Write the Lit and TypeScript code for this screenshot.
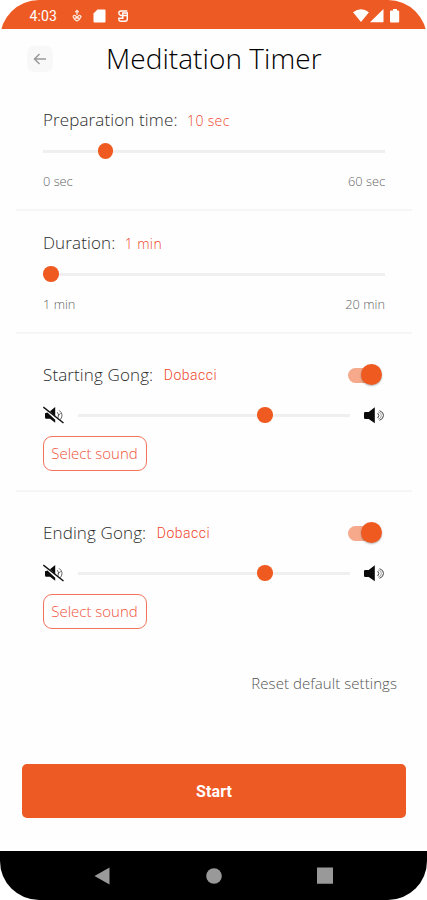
import { LitElement, html, css, svg } from "lit";
import { customElement, property } from "lit/decorators.js";

@customElement("value-slider")
class ValueSlider extends LitElement {
  @property({ type: Number }) value = 0;
  static styles = css`
    :host { display: block; flex: 1; height: 16px; }
    .rail { height: 16px; display: flex; align-items: center; position: relative; }
    .track { flex: 1; height: 3px; background: #efefef; }
    .thumb {
      position: absolute; top: 0.3px; width: 15.6px; height: 15.6px; border-radius: 50%;
      background: #ee5a20;
    }
  `;
  render() {
    return html`<div class="rail">
      <div class="track"></div>
      <div class="thumb" style="left: calc((100% - 15.6px) * ${this.value})"></div>
    </div>`;
  }
}

const speaker = svg`<path fill="#0a0a0a" d="M1 6.2Q1 5 2.2 5H5.7l6.1-4.7v15.9L5.7 12H2.200Q1 12 1 10.800z"/>
  <path fill="none" stroke="#444" stroke-width="1" d="M14.700 6.200q2.400 2.300 0 4.800M16.500 3.600q4.400 1.600 4 5.100t-4 4.600"/>
  <path fill="none" stroke="#888" stroke-width=".8" d="M15.100 4.800q3.600 1.200 3.300 3.900t-3.300 3.700"/>`;

@customElement("gong-section")
class GongSection extends LitElement {
  @property() label = "";
  @property() sound = "";
  static styles = css`
    :host { display: block; font-family: "Open Sans", sans-serif; font-weight: 300; }
    .head { display: flex; align-items: center; height: 24px; white-space: nowrap; }
    .label { font-size: 17px; color: #2c2c2c; letter-spacing: 0.12px; margin-top: -2px; }
    .sound { font: 300 14px Roboto, sans-serif; color: #f0432c; margin-left: 10.5px; letter-spacing: 0.48px; }
    .switch { margin-left: auto; margin-right: 3.5px; width: 34px; height: 22px; position: relative; display: flex; align-items: center; }
    .bar { width: 30px; height: 15px; border-radius: 8px; background: #f6a98b; }
    .knob {
      position: absolute; right: 0; top: 0; width: 21px; height: 21px; border-radius: 50%;
      background: #ee5a20; box-shadow: 0 1px 2px rgba(0, 0, 0, 0.3);
    }
    .volume { display: flex; align-items: center; height: 20px; margin-top: 18px; }
    .volume value-slider { margin: 0 13.5px 0 13.5px; }
    svg { display: block; flex: none; }
    .select {
      box-sizing: border-box; width: 104px; height: 35px; margin-top: 11px; display: flex; align-items: center;
      justify-content: center; border: 1px solid #f3735d; border-radius: 9px; background: none; padding: 0 1px 1px 0;
      font: 300 15px "Open Sans", sans-serif; color: #f0533c; white-space: nowrap;
    }
  `;
  render() {
    return html`
      <div class="head">
        <span class="label">${this.label}</span><span class="sound">${this.sound}</span>
        <div class="switch"><div class="bar"></div><div class="knob"></div></div>
      </div>
      <div class="volume">
        <svg width="21" height="18" viewBox="0 0 21 18">
          <path fill="#0a0a0a" d="M7 5.200 12.200 1v9.600zM2 7.200l2.500-.7 7.700 7.300v2.900L7 12.800H3.200Q2 12.800 2 11.300z"/>
          <path fill="none" stroke="#555" stroke-width=".9" d="M14.300 6.200q2.500 2.500.6 5.800M16.200 4.400q5 4 1.200 9.200M14.700 9.500l3-2"/>
          <path stroke="#111" stroke-width="1.500" d="M.3 1 20.500 17"/>
        </svg>
        <value-slider .value=${0.7}></value-slider>
        <svg width="22" height="17" viewBox="0 0 22 17">${speaker}</svg>
      </div>
      <button class="select">Select sound</button>
    `;
  }
}

@customElement("time-section")
class TimeSection extends LitElement {
  @property() label = "";
  @property() current = "";
  @property() min = "";
  @property() max = "";
  @property({ type: Number }) value = 0;
  static styles = css`
    :host { display: block; font-family: "Open Sans", sans-serif; font-weight: 300; white-space: nowrap; }
    .head { display: flex; align-items: center; height: 24px; margin-bottom: 11px; }
    .label { font-size: 17px; color: #2c2c2c; letter-spacing: 0.12px; margin-top: -2px; }
    .current { font-size: 14px; color: #f0432c; margin: 1px 0 0 9.5px; letter-spacing: 0.35px; }
    .range { display: flex; justify-content: space-between; margin-top: 12.5px; font-size: 12.8px; line-height: 18px; color: #666; }
  `;
  render() {
    return html`
      <div class="head"><span class="label">${this.label}</span><span class="current">${this.current}</span></div>
      <value-slider .value=${this.value}></value-slider>
      <div class="range"><span>${this.min}</span><span>${this.max}</span></div>
    `;
  }
}

@customElement("app-root")
class AppRoot extends LitElement {
  static styles = css`
    :host { display: block; width: 427px; height: 900px; background: #fff; font-family: "Open Sans", sans-serif; }
    .phone { height: 900px; display: flex; flex-direction: column; overflow: hidden; border-radius: 39px; background: #fefefe; }
    .status { height: 29px; flex: none; background: #ee5a24; display: flex; align-items: center; box-sizing: border-box; padding: 3px 27px 0 29.5px; }
    .clock { font: 400 14px Roboto, sans-serif; color: #fff; width: 41.5px; letter-spacing: 0.1px; }
    .spacer { flex: 1; }
    svg { display: block; flex: none; }
    .header { height: 60px; flex: none; display: flex; align-items: center; padding-left: 27px; }
    .back { width: 26px; height: 26px; border-radius: 7px; background: #f8f8f8; display: grid; place-items: center; }
    h1 { margin: -2px 0 0 53px; font-weight: 300; font-size: 28px; line-height: 40px; color: #000; white-space: nowrap; letter-spacing: 0.06px; }
    .block { margin: 0 15px 0 16px; padding: 0 27px; box-sizing: border-box; border-bottom: 2px solid #f6f6f6; flex: none; }
    .prep { height: 122px; padding-top: 19px; }
    .duration { height: 123px; padding-top: 20px; }
    .gong { height: 158px; padding-top: 29px; }
    .last { border: none; padding-top: 29px; }
    .reset { align-self: flex-end; margin: 23px 30px 0 0; font-size: 15px; line-height: 20px; font-weight: 300; color: #555; white-space: nowrap; letter-spacing: 0.06px; }
    .start { margin: 71px 21px 0 22px; height: 54px; flex: none; border: none; border-radius: 5px; background: #ee5a24; color: #fff; font: 700 16px Roboto, sans-serif; letter-spacing: 0.1px; }
    .nav { margin-top: auto; height: 49px; flex: none; background: #000; display: flex; justify-content: space-between; align-items: center; padding: 0 94px; }
  `;
  render() {
    return html`
      <div class="phone">
        <div class="status">
          <span class="clock">4:03</span>
          <svg width="12" height="14" viewBox="0 0 12 14" fill="none" stroke="#ffe4da" stroke-width="1.300">
            <path d="M6 1v5M4.300 3.200 6 1.400l1.700 1.800M2 7.500Q2.500 6 4 6.500l2 1.500 2-1.500q1.500-.5 2 1-1 3-4 4.500-3-1.500-4-4.500M4 9h4"/>
          </svg>
          <svg width="13" height="14" viewBox="0 0 13 14" style="margin-left:10px"><path fill="#fff" d="M4.500.5h7q1 0 1 1v11q0 1-1 1h-10q-1 0-1-1v-8z"/></svg>
          <svg width="12" height="14" viewBox="0 0 12 14" style="margin-left:10.500px" fill="none" stroke="#fff" stroke-width="1.400">
            <path d="M10.300 2H4Q1.800 2 1.800 4t2.200 2.500h6.300V10q0 2.300-2.300 2.300H4.200q-2.400 0-2.400-2.300V9.300h4V4h4.500v2.500"/>
          </svg>
          <span class="spacer"></span>
          <svg width="47" height="14" viewBox="0 0 47 14" fill="#fff">
            <path d="M0 3.200Q8-2.500 16 3.200L8 13zM17 13.200 30.500 0v13.200zM38 1.400h2V0h4v1.400h1.200q1 0 1 1v10q0 1-1 1H38q-1 0-1-1v-10q0-1 1-1z"/>
          </svg>
        </div>
        <div class="header">
          <div class="back">
            <svg width="14" height="12" viewBox="0 0 14 12" fill="none" stroke="#999" stroke-width="1.500"><path d="M13 6H1.500M6.500 1l-5 5 5 5"/></svg>
          </div>
          <h1>Meditation Timer</h1>
        </div>
        <div class="block prep">
          <time-section label="Preparation time:" current="10 sec" min="0 sec" max="60 sec" .value=${0.168}></time-section>
        </div>
        <div class="block duration">
          <time-section label="Duration:" current="1 min" min="1 min" max="20 min" .value=${0}></time-section>
        </div>
        <div class="block gong"><gong-section label="Starting Gong:" sound="Dobacci"></gong-section></div>
        <div class="block gong last"><gong-section label="Ending Gong:" sound="Dobacci"></gong-section></div>
        <div class="reset">Reset default settings</div>
        <button class="start">Start</button>
        <div class="nav">
          <svg width="16" height="18" viewBox="0 0 16 18"><path fill="#999" d="M15.500.5v17L.5 9z"/></svg>
          <svg width="16" height="16" viewBox="0 0 16 16"><circle cx="8" cy="8" r="7.800" fill="#999"/></svg>
          <svg width="16" height="17" viewBox="0 0 16 17"><path fill="#999" d="M0 .5h16v16.300H0z"/></svg>
        </div>
      </div>
    `;
  }
}
